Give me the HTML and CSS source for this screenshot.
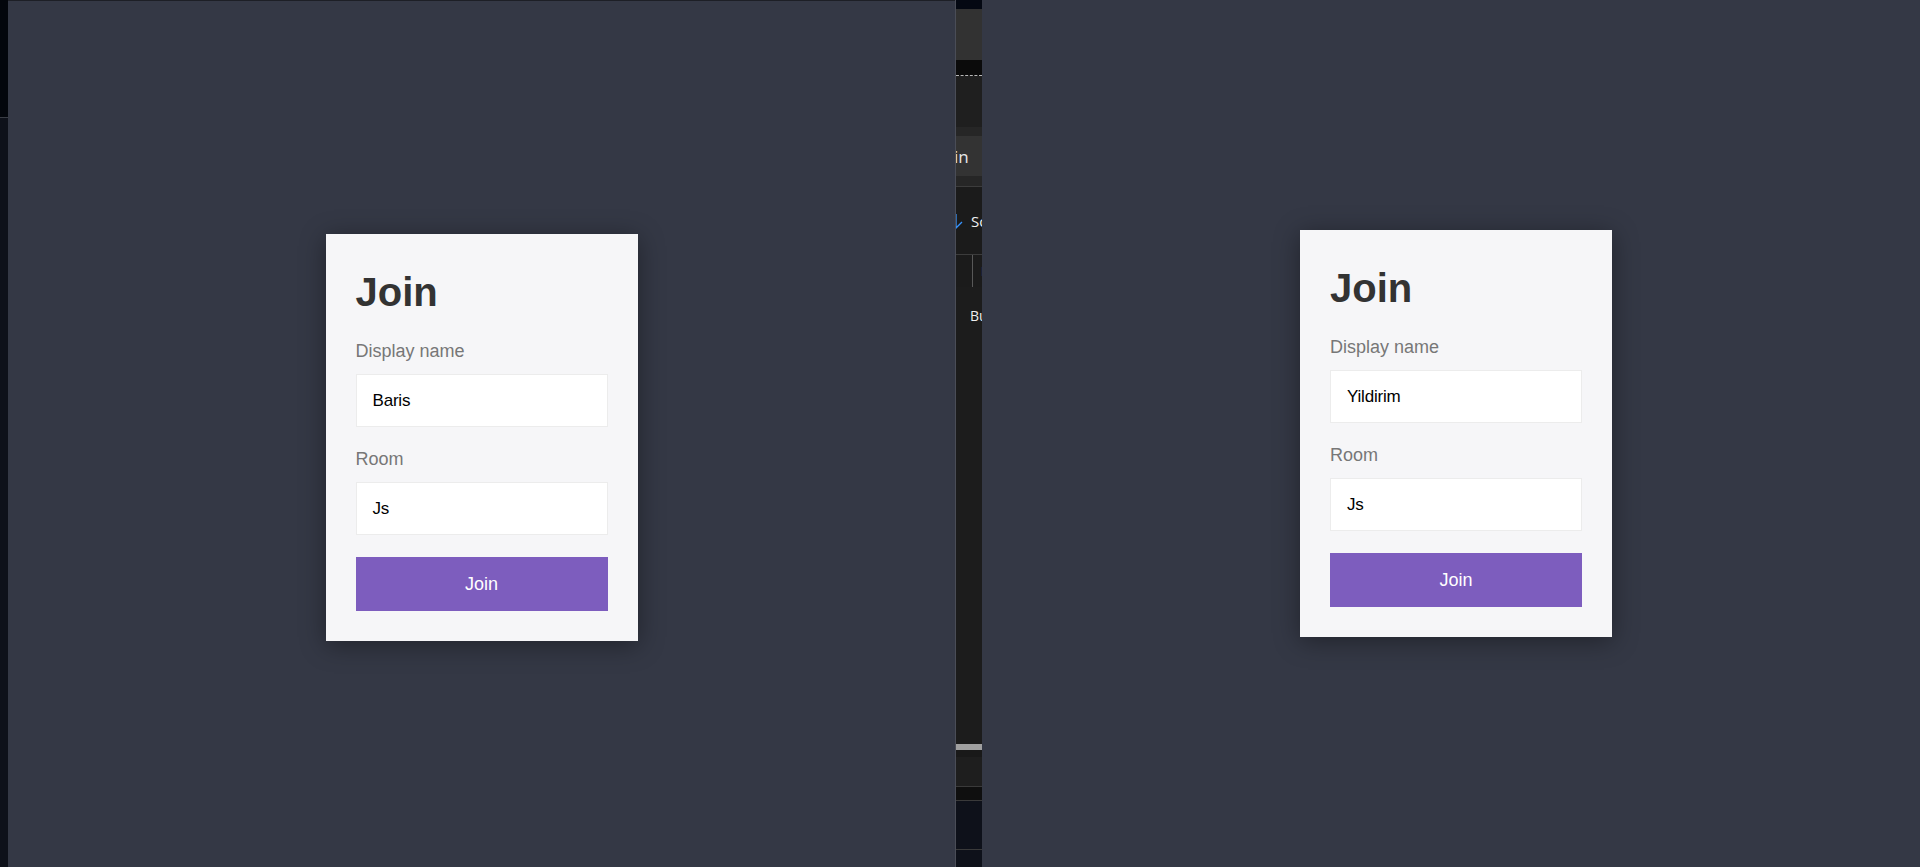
FILE: index.html
```html
<!DOCTYPE html>
<html lang="en">
<head>
<meta charset="utf-8">
<title>Join</title>
<link rel="stylesheet" href="styles.css">
</head>
<body>
<div class="desktop">
  <div class="edge-left">
    <div class="edge-top"></div>
    <div class="edge-bottom"></div>
  </div>

  <section class="window window-left">
    <form class="card">
      <h1 class="card-title">Join</h1>
      <label class="field-label">Display name</label>
      <div class="field">Baris</div>
      <label class="field-label">Room</label>
      <div class="field">Js</div>
      <div class="btn">Join</div>
    </form>
  </section>

  <div class="ide-strip">
    <div class="ide-title"></div>
    <div class="ide-menu"></div>
    <div class="ide-tabs"></div>
    <div class="ide-gap"></div>
    <div class="ide-tab-active"><span class="ide-tab-text">in</span></div>
    <div class="ide-tab-after"></div>
    <div class="ide-toolbar">
      <svg class="ide-arrow" width="8" height="18" viewBox="0 0 8 18"><path d="M1 1 L1 15 L7 9" fill="none" stroke="#3794ff" stroke-width="1.3"/></svg>
      <span class="ide-tool-text">Sou</span>
    </div>
    <div class="ide-header">
      <span class="ide-vline"></span>
      <span class="ide-header-text">D</span>
    </div>
    <div class="ide-body">
      <span class="ide-body-text">Bu</span>
    </div>
    <div class="ide-scroll"></div>
    <div class="ide-under"></div>
    <div class="ide-panel"></div>
    <div class="ide-status"></div>
    <div class="ide-task"></div>
    <div class="ide-task2"></div>
  </div>

  <section class="window window-right">
    <form class="card">
      <h1 class="card-title">Join</h1>
      <label class="field-label">Display name</label>
      <div class="field">Yildirim</div>
      <label class="field-label">Room</label>
      <div class="field">Js</div>
      <div class="btn">Join</div>
    </form>
  </section>
</div>
</body>
</html>
```

FILE: styles.css
```css
* { box-sizing: border-box; }

html, body {
  margin: 0;
  padding: 0;
  width: 1920px;
  height: 867px;
  overflow: hidden;
  background: #0e111a;
}

.desktop {
  display: flex;
  align-items: flex-start;
  width: 1920px;
  height: 867px;
  overflow: hidden;
}

/* left screen edge */
.edge-left {
  flex: none;
  width: 8px;
  height: 867px;
  display: flex;
  flex-direction: column;
}
.edge-top {
  flex: none;
  height: 118px;
  background: #03060c;
  border-bottom: 1px solid #3a3d45;
}
.edge-bottom {
  flex: 1;
  background: #0e111a;
}

/* app windows */
.window {
  flex: none;
  background: #343845;
  display: flex;
  align-items: center;
  justify-content: center;
}
.window-left {
  width: 947px;
  height: 874px;
  border-top: 1px solid #1d1f26;
}
.window-right {
  width: 948px;
  height: 867px;
}

/* card */
.card {
  width: 312px;
  padding: 30px;
  background: #f6f6f8;
  box-shadow: 0 4px 24px rgba(0, 0, 0, 0.38);
  display: flex;
  flex-direction: column;
  font-family: "Liberation Sans", Arial, sans-serif;
}
.card-title {
  margin: 0 0 21px;
  font-size: 40px;
  line-height: 56px;
  font-weight: bold;
  color: #333333;
}
.field-label {
  display: block;
  font-size: 18px;
  line-height: 21px;
  color: #777777;
  margin-bottom: 12px;
}
.field {
  height: 53px;
  margin-bottom: 22px;
  background: #ffffff;
  border: 1px solid #ececec;
  padding: 0 16px;
  display: flex;
  align-items: center;
  font-size: 17px;
  color: #000000;
  letter-spacing: -0.2px;
}
.btn {
  height: 54px;
  background: #7d5dbe;
  color: #ffffff;
  font-size: 18px;
  display: flex;
  align-items: center;
  justify-content: center;
}

/* peek of IDE window between */
.ide-strip {
  flex: none;
  width: 27px;
  height: 867px;
  border-left: 1px solid #4a4d57;
  display: flex;
  flex-direction: column;
  overflow: hidden;
  font-family: "Open Sans", "Noto Sans", sans-serif;
  color: #e0e0e0;
  font-size: 13px;
}
.ide-title { height: 9px; background: #040812; flex: none; }
.ide-menu { height: 51px; background: #323232; flex: none; }
.ide-tabs {
  height: 16px;
  background: #0b0b0b;
  border-bottom: 1px dashed #b8b8b8;
  flex: none;
}
.ide-gap {
  height: 60px;
  background: #1f1f1f;
  flex: none;
  border-bottom: 9px solid #262626;
}
.ide-tab-active {
  height: 40px;
  background: #333333;
  flex: none;
  display: flex;
  align-items: center;
  overflow: hidden;
}
.ide-tab-text {
  font-size: 17px;
  margin-left: -2px;
  color: #e6e6e6;
}
.ide-tab-after {
  height: 11px;
  background: #262626;
  border-bottom: 1px solid #3c3c3c;
  flex: none;
}
.ide-toolbar {
  height: 68px;
  background: #1b1b1b;
  border-bottom: 1px solid #3c3c3c;
  flex: none;
  display: flex;
  align-items: flex-start;
  padding-top: 24px;
  gap: 8px;
  white-space: nowrap;
  overflow: hidden;
}
.ide-arrow { flex: none; margin-left: -1px; margin-top: 2px; }
.ide-tool-text { font-size: 15px; line-height: 20px; color: #f0f0f0; }
.ide-header {
  height: 32px;
  background: #1b1b1b;
  flex: none;
  display: flex;
  align-items: center;
  padding-left: 16px;
  gap: 8px;
  white-space: nowrap;
}
.ide-vline {
  width: 1px;
  height: 32px;
  background: #585858;
  flex: none;
}
.ide-header-text { font-size: 13px; color: #d0d0d0; }
.ide-body {
  height: 457px;
  background: #1c1c1c;
  flex: none;
  padding: 19px 0 0 14px;
  white-space: nowrap;
}
.ide-body-text { font-size: 14px; line-height: 20px; color: #eeeeee; }
.ide-scroll { height: 6px; background: #a0a0a0; flex: none; }
.ide-under { height: 7px; background: #191919; flex: none; }
.ide-panel {
  height: 30px;
  background: #1e1e1e;
  border-bottom: 1px solid #3a3a3a;
  flex: none;
}
.ide-status {
  height: 14px;
  background: #0f0f0f;
  border-bottom: 1px solid #3a3a3a;
  flex: none;
}
.ide-task {
  height: 49px;
  background: #0e111a;
  border-bottom: 1px solid #3a3a3a;
  flex: none;
}
.ide-task2 { flex: 1; background: #0e111a; }
```
